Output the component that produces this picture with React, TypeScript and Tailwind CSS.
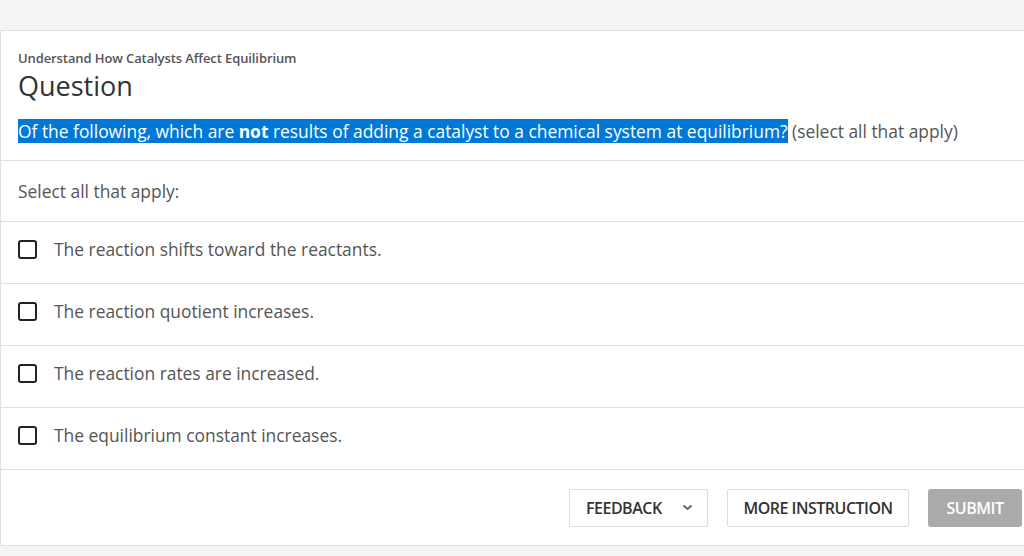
import React from 'react';

const options = [
    'The reaction shifts toward the reactants.',
    'The reaction quotient increases.',
    'The reaction rates are increased.',
    'The equilibrium constant increases.',
];

const App = () => {
    const [checked, setChecked] = React.useState<boolean[]>(options.map(() => false));

    const toggle = (i: number) => {
        setChecked(prev => prev.map((c, idx) => (idx === i ? !c : c)));
    };

    return (
        <div className="min-h-[556px] bg-[#f5f5f5] pt-[30px] font-['Open_Sans',sans-serif]">
            <div className="bg-white border-t border-l border-b border-[#e0e0e0]">
                {/* Header */}
                <div className="px-[17px] pt-[18px] pb-[18px] border-b border-[#e0e0e0]">
                    <div className="text-[13px] leading-[18px] font-semibold text-[#555] tracking-[-0.1px]">
                        Understand How Catalysts Affect Equilibrium
                    </div>
                    <h1 className="mt-[3px] text-[27px] leading-[32px] text-[#333]">Question</h1>
                    <p className="mt-[18px] text-[17.4px] leading-[22px] text-[#555]">
                        <span className="bg-[#0078d7] text-white">
                            Of the following, which are <b>not</b> results of adding a catalyst to a chemical system at equilibrium?
                        </span>{' '}
                        (select all that apply)
                    </p>
                </div>

                <div className="h-[61px] flex items-center px-[17px] border-b border-[#e0e0e0] text-[17.4px] text-[#555]">
                    Select all that apply:
                </div>

                {options.map((opt, i) => (
                    <label
                        key={i}
                        className="h-[62px] flex items-center px-[17px] pb-[6px] border-b border-[#e0e0e0] cursor-pointer"
                    >
                        <span
                            onClick={() => toggle(i)}
                            className="w-[19px] h-[19px] border-2 border-[#222] rounded-[3px] flex items-center justify-center text-[12px]"
                        >
                            {checked[i] ? '✓' : ''}
                        </span>
                        <span className="ml-[17px] text-[17.4px] text-[#555]">{opt}</span>
                    </label>
                ))}

                {/* Footer */}
                <div className="h-[75px] flex items-center justify-end gap-[19px] pr-[2px]">
                    <button className="h-[38px] w-[139px] flex items-center justify-between pl-[16px] pr-[14px] border border-[#ddd] rounded-[2px] bg-white text-[16px] font-semibold text-[#333] tracking-[-0.5px]">
                        FEEDBACK
                        <svg width="11" height="7" viewBox="0 0 11 7" fill="none">
                            <path d="M1.5 1.5 L5.5 5 L9.5 1.5" stroke="#666" strokeWidth="2" />
                        </svg>
                    </button>
                    <button className="h-[38px] w-[182px] border border-[#ddd] rounded-[2px] bg-white text-[16px] font-semibold text-[#333] tracking-[-0.5px]">
                        MORE INSTRUCTION
                    </button>
                    <button className="h-[38px] w-[94px] rounded-[3px] bg-[#aaa] text-[16px] font-semibold text-white tracking-[-0.5px]">
                        SUBMIT
                    </button>
                </div>
            </div>
        </div>
    );
};

export default App;
